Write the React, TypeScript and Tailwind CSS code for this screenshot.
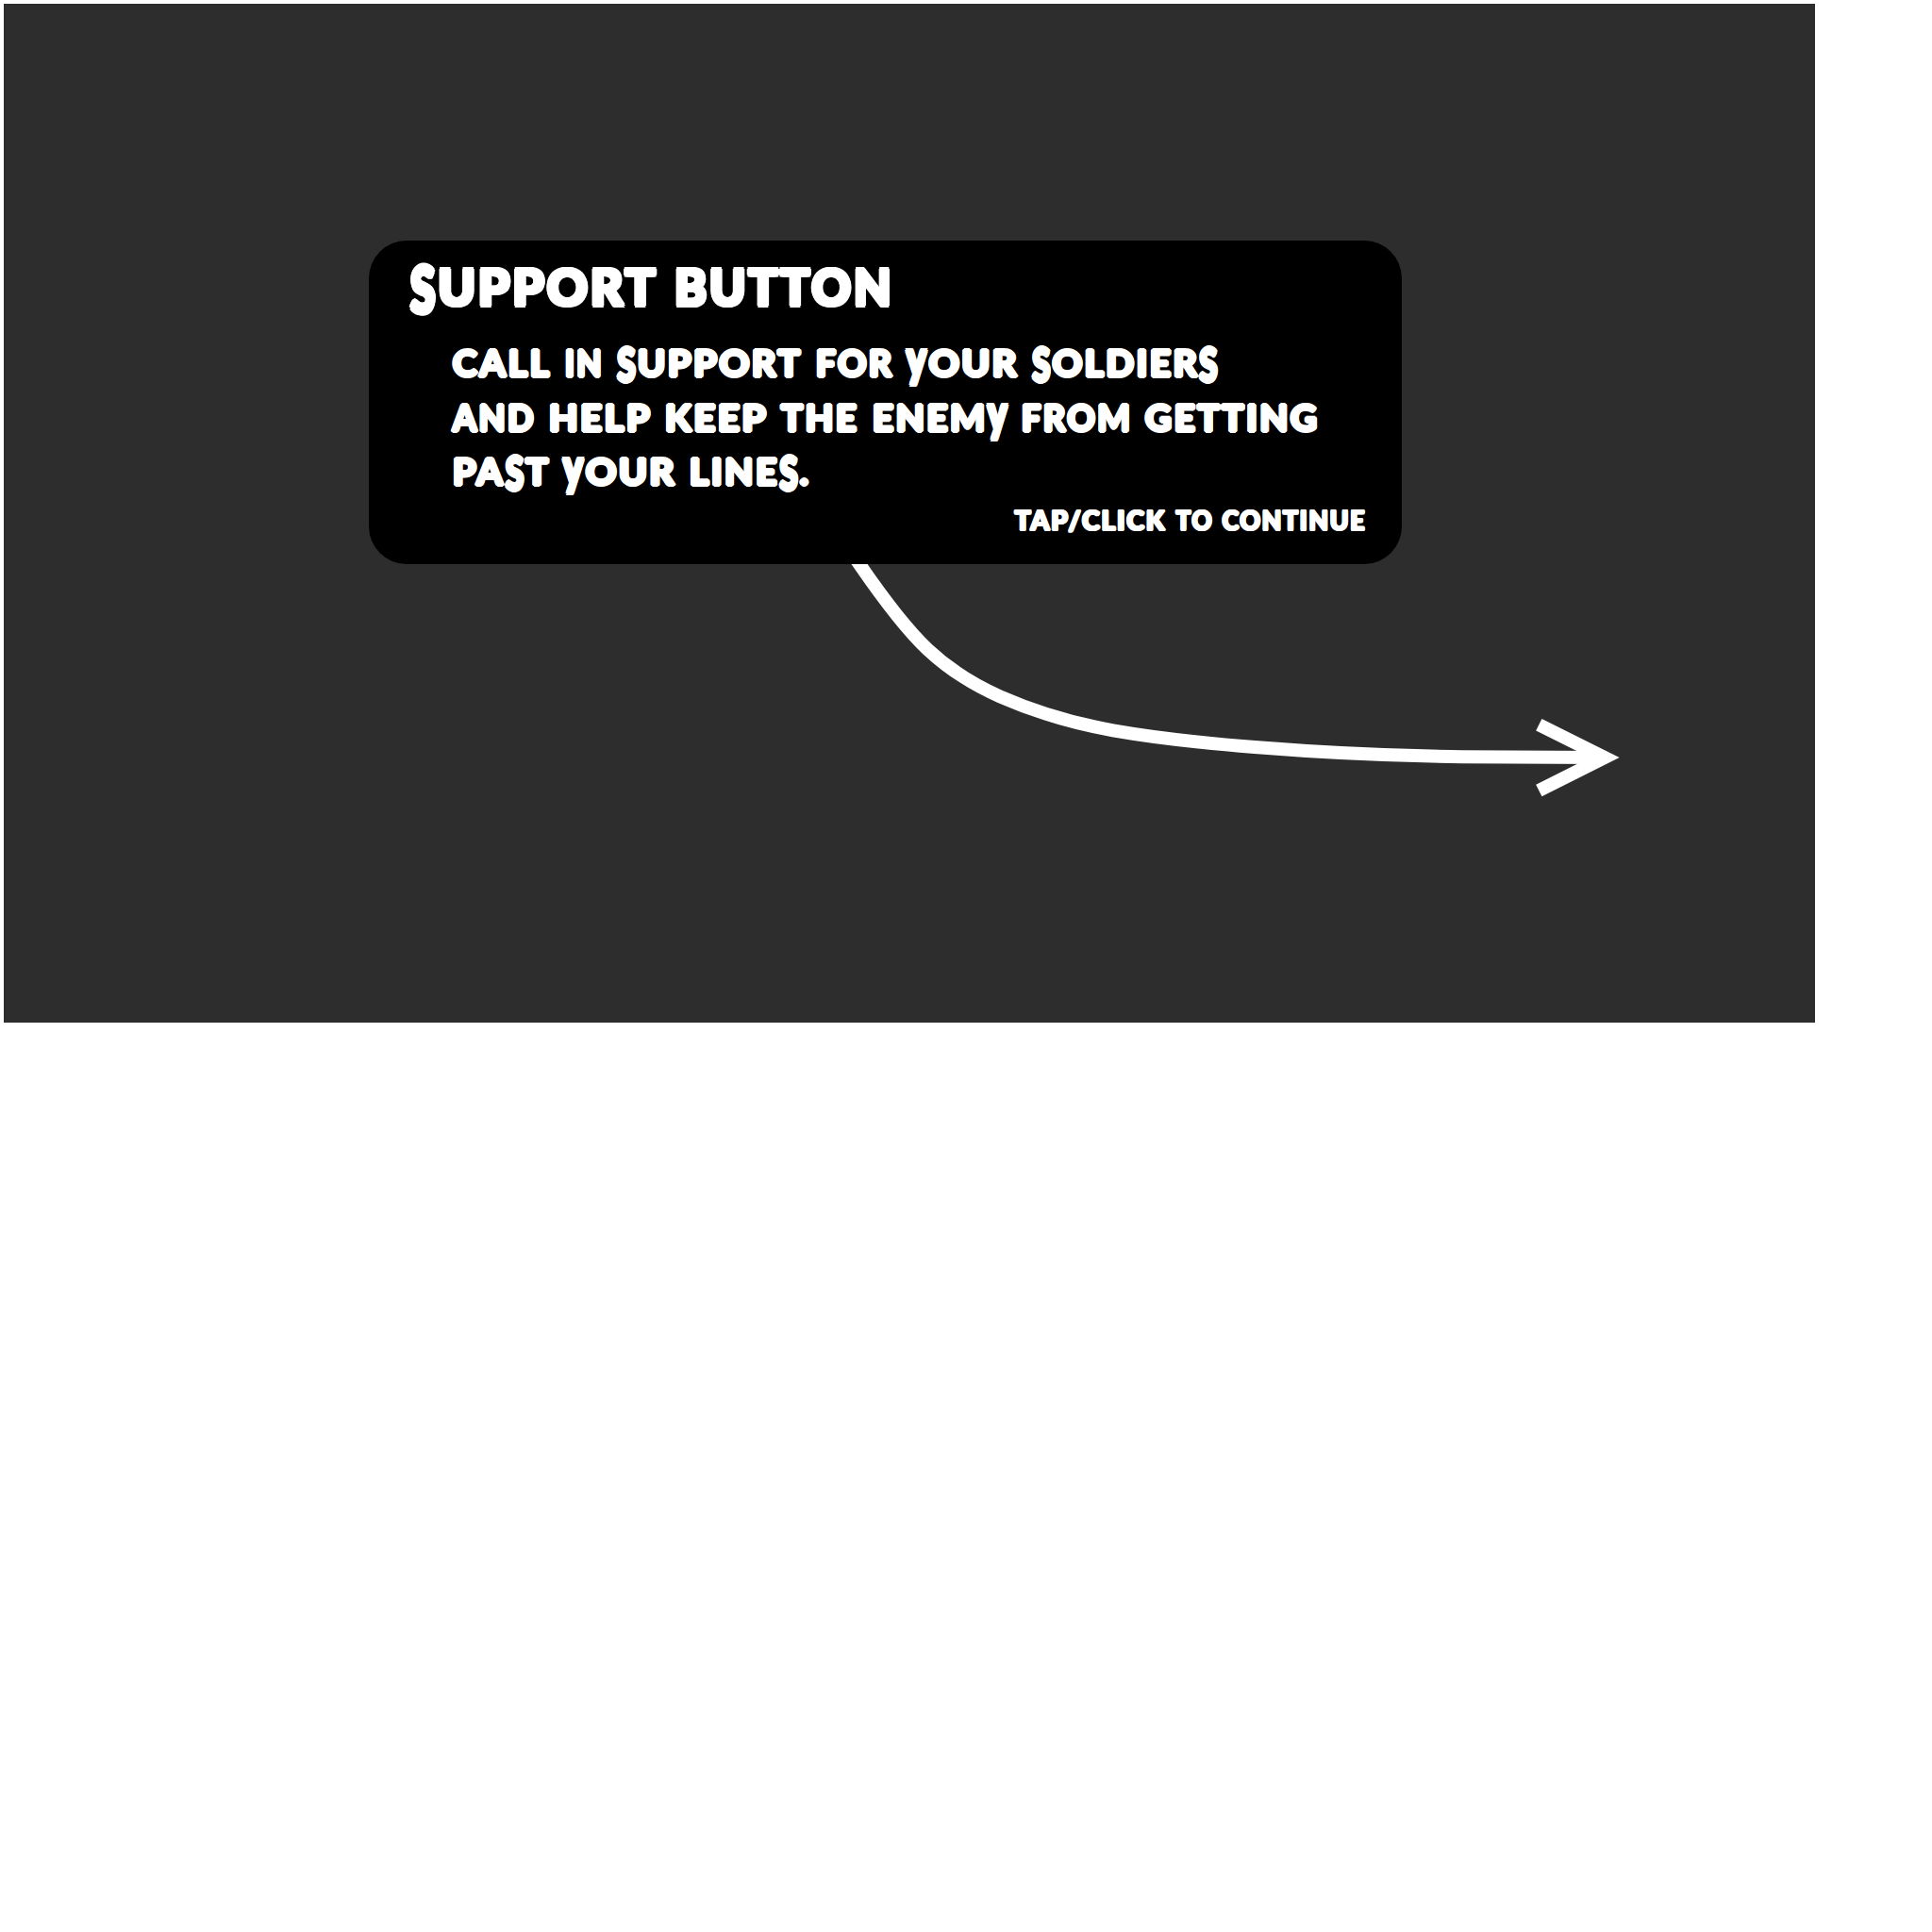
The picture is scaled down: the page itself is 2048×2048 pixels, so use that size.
import { useLayoutEffect, useRef, useState } from "react";

type WordSpec = [text: string, width: number];

const title: WordSpec[] = [["SUPPORT", 263], ["BUTTON", 233]];

const body: WordSpec[][] = [
  [["CALL", 105], ["IN", 41], ["SUPPORT", 197], ["FOR", 82], ["yOUR", 118.5], ["SOLDIERS", 198.5]],
  [["AND", 88], ["HELP", 109], ["KEEP", 109], ["THE", 82.5], ["ENEMy", 144.5], ["FROM", 117], ["GETTING", 184.5]],
  [["PAST", 103], ["yOUR", 119.5], ["LINES.", 128]],
];

const footer: WordSpec[] = [["TAP/CLICK", 160.5], ["TO", 39.5], ["CONTINUE", 152]];

/** A word condensed or widened so that it fills the given width. */
function Word({ text, width }: { text: string; width: number }) {
  const ref = useRef<HTMLSpanElement>(null);
  const [ratio, setRatio] = useState(1);

  useLayoutEffect(() => {
    if (ref.current) setRatio(width / (ref.current.offsetWidth - 1));
  }, [text, width]);

  return (
    <span className="block shrink-0" style={{ width }}>
      <span
        ref={ref}
        className="inline-block origin-left whitespace-nowrap pl-[0.02em] tracking-[0.06em]"
        style={{ transform: `scaleX(${ratio})` }}
      >
        {text.split(/([Sy])/).map((part, i) => {
          if (part === "S")
            return (
              <span key={i} className="-mr-[0.06em] inline-block origin-[0%_88.7%] translate-y-[0.14em] scale-x-[0.9] scale-y-[1.27] leading-none">
                S
              </span>
            );
          if (part === "y")
            return (
              <span key={i} className="inline-block origin-[50%_88.7%] scale-y-[1.38] leading-none">
                y
              </span>
            );
          return part;
        })}
      </span>
    </span>
  );
}

/** A row of words in heavy lettering with rounded corners. */
function Line({ words, className }: { words: WordSpec[]; className: string }) {
  return (
    <div
      className={`flex [text-shadow:0.045em_0_#fff,-0.045em_0_#fff,0_0.045em_#fff,0_-0.045em_#fff,0.032em_0.032em_#fff,-0.032em_0.032em_#fff,0.032em_-0.032em_#fff,-0.032em_-0.032em_#fff] ${className}`}
    >
      {words.map(([text, width]) => (
        <Word key={text} text={text} width={width} />
      ))}
    </div>
  );
}

export default function App() {
  return (
    <div className="h-[2048px] w-[2048px] overflow-hidden bg-white p-1">
      <main className="relative h-[1080px] w-[1920px] bg-[#2d2d2d] pl-[387px] pt-[251px]">
        <svg className="absolute left-0 top-0" width="1920" height="1080" viewBox="4 4 1920 1080" fill="none" stroke="#fff" strokeWidth="14">
          <path d="M891.7 570 L911 598 C935.1 633 959.2 665.8 983.3 688.3 C1008.9 712.2 1034.4 727 1060 738.3 C1100 755.9 1140 767.1 1180 774.3 C1230 783.1 1280 788 1330 792 C1403.3 797.9 1476.7 801.3 1550 802.2 C1600 802.8 1650 803 1701 803" />
          <path d="M1631.3 768.3 L1701 803 L1631.3 838" />
        </svg>
        <section className="relative h-[343px] w-[1095px] rounded-[40px] bg-black pl-[43px] pt-[15px] font-['Lato','Liberation_Sans',sans-serif] font-black text-white">
          <h1>
            <Line words={title} className="gap-[17px] text-[53px] leading-[68px]" />
          </h1>
          <div className="pl-[45px] pt-[18px]">
            {body.map((words, i) => (
              <Line key={i} words={words} className="gap-[14px] text-[38.5px] leading-[57.5px]" />
            ))}
          </div>
          <Line words={footer} className="justify-end gap-[10px] pr-[39px] text-[28.5px] leading-[44px]" />
        </section>
      </main>
    </div>
  );
}
